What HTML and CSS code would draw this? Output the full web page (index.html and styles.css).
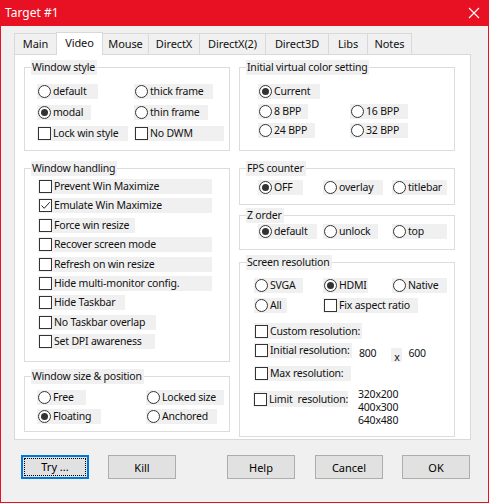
FILE: index.html
```html
<!DOCTYPE html>
<html>
<head>
<meta charset="utf-8">
<link rel="stylesheet" href="styles.css">
</head>
<body>
<div class="window">
  <div class="titlebar">
    <span class="title">Target #1</span>
    <svg class="close" width="12" height="12" viewBox="0 0 12 12"><path d="M1 1 L11 11 M11 1 L1 11" stroke="#fff" stroke-width="1.1" fill="none"/></svg>
  </div>
  <div class="body">
    <div class="tabs">
      <div class="tab t-main">Main</div>
      <div class="tab t-video sel">Video</div>
      <div class="tab t-mouse">Mouse</div>
      <div class="tab t-dx">DirectX</div>
      <div class="tab t-dx2">DirectX(2)</div>
      <div class="tab t-d3d">Direct3D</div>
      <div class="tab t-libs">Libs</div>
      <div class="tab t-notes">Notes</div>
    </div>
    <div class="panel">
      <div class="col">
        <fieldset class="gb gb-ws">
          <legend>Window style</legend>
          <div class="grid2 ws-grid">
            <label class="ctl w-default"><span class="radio"></span>default</label>
            <label class="ctl w-thick"><span class="radio"></span>thick frame</label>
            <label class="ctl w-modal"><span class="radio on"></span>modal</label>
            <label class="ctl w-thin"><span class="radio"></span>thin frame</label>
            <label class="ctl w-lock"><span class="check"></span>Lock win style</label>
            <label class="ctl w-nodwm"><span class="check"></span>No DWM</label>
          </div>
        </fieldset>
        <fieldset class="gb gb-wh">
          <legend>Window handling</legend>
          <div class="stack wh-stack">
            <label class="ctl w-long"><span class="check"></span>Prevent Win Maximize</label>
            <label class="ctl w-long"><span class="check on"><svg width="11" height="11" viewBox="0 0 11 11"><path d="M1.5 5.5 L4.2 8.3 L9.8 2.2" stroke="#222" stroke-width="1" fill="none"/></svg></span>Emulate Win Maximize</label>
            <label class="ctl w-force"><span class="check"></span>Force win resize</label>
            <label class="ctl w-long"><span class="check"></span>Recover screen mode</label>
            <label class="ctl w-long"><span class="check"></span>Refresh on win resize</label>
            <label class="ctl w-long"><span class="check"></span>Hide multi-monitor config.</label>
            <label class="ctl w-hidetb"><span class="check"></span>Hide Taskbar</label>
            <label class="ctl w-notb"><span class="check"></span>No Taskbar overlap</label>
            <label class="ctl w-dpi"><span class="check"></span>Set DPI awareness</label>
          </div>
        </fieldset>
        <fieldset class="gb gb-wsp">
          <legend>Window size &amp; position</legend>
          <div class="grid2 wsp-grid">
            <label class="ctl w-free"><span class="radio"></span>Free</label>
            <label class="ctl w-locked"><span class="radio"></span>Locked size</label>
            <label class="ctl w-floating"><span class="radio on"></span>Floating</label>
            <label class="ctl w-anch"><span class="radio"></span>Anchored</label>
          </div>
        </fieldset>
      </div>
      <div class="col">
        <fieldset class="gb gb-color">
          <legend>Initial virtual color setting</legend>
          <div class="grid2 color-grid">
            <label class="ctl w-current"><span class="radio on"></span>Current</label>
            <span></span>
            <label class="ctl w-8bpp"><span class="radio"></span>8 BPP</label>
            <label class="ctl w-16bpp"><span class="radio"></span>16 BPP</label>
            <label class="ctl w-24bpp"><span class="radio"></span>24 BPP</label>
            <label class="ctl w-16bpp"><span class="radio"></span>32 BPP</label>
          </div>
        </fieldset>
        <fieldset class="gb gb-fps">
          <legend>FPS counter</legend>
          <div class="grid3 fps-grid">
            <label class="ctl w-off"><span class="radio on"></span>OFF</label>
            <label class="ctl w-overlay"><span class="radio"></span>overlay</label>
            <label class="ctl w-titlebar"><span class="radio"></span>titlebar</label>
          </div>
        </fieldset>
        <fieldset class="gb gb-z">
          <legend>Z order</legend>
          <div class="grid3 z-grid">
            <label class="ctl w-zdef"><span class="radio on"></span>default</label>
            <label class="ctl w-unlock"><span class="radio"></span>unlock</label>
            <label class="ctl w-titlebar"><span class="radio"></span>top</label>
          </div>
        </fieldset>
        <fieldset class="gb gb-sr">
          <legend>Screen resolution</legend>
          <div class="grid3 sr-grid">
            <label class="ctl w-svga"><span class="radio"></span>SVGA</label>
            <label class="ctl w-hdmi"><span class="radio on"></span>HDMI</label>
            <label class="ctl w-titlebar"><span class="radio"></span>Native</label>
            <label class="ctl w-all"><span class="radio"></span>All</label>
            <label class="ctl w-fix span2"><span class="check"></span>Fix aspect ratio</label>
          </div>
          <div class="sr-stack">
            <label class="ctl tall w-custom"><span class="check"></span>Custom resolution:</label>
            <div class="row-init">
              <label class="ctl w-init"><span class="check"></span>Initial resolution:</label>
              <span class="num n800">800</span>
              <span class="xbox">x</span>
              <span class="num n600">600</span>
            </div>
            <label class="ctl w-max"><span class="check"></span>Max resolution:</label>
            <div class="row-limit">
              <label class="ctl tall w-limit"><span class="check"></span>Limit&nbsp; resolution:</label>
              <div class="reslist">
                <div>320x200</div>
                <div>400x300</div>
                <div>640x480</div>
              </div>
            </div>
          </div>
        </fieldset>
      </div>
    </div>
    <div class="buttons">
      <button class="btn focus"><span class="focusrect">Try ...</span></button>
      <button class="btn b-kill">Kill</button>
      <button class="btn b-help">Help</button>
      <button class="btn b-cancel">Cancel</button>
      <button class="btn b-ok">OK</button>
    </div>
  </div>
</div>
</body>
</html>
```
FILE: styles.css
```css
* { box-sizing: border-box; }
html, body { margin: 0; padding: 0; }
body {
  width: 489px;
  height: 503px;
  overflow: hidden;
  background: #f0f0f0;
  font-family: "Noto Sans", "Open Sans", sans-serif;
  font-size: 10.5px;
  letter-spacing: -0.2px;
  color: #111;
}
.window {
  width: 489px;
  height: 503px;
  border: 1px solid #e81123;
  border-top: none;
  background: #f0f0f0;
  display: flex;
  flex-direction: column;
}
.titlebar {
  height: 26px;
  margin: 0 -1px;
  background: #e81123;
  color: #fff;
  display: flex;
  align-items: center;
  justify-content: space-between;
  padding: 0 9px 0 5px;
}
.title { font-size: 12px; line-height: 1; letter-spacing: 0; }
.close { display: block; }

.body { padding: 6px 0 0 13px; }

.tabs {
  display: flex;
  align-items: flex-end;
  height: 22px;
}
.tab {
  height: 21px;
  border: 1px solid #d9d9d9;
  border-bottom: none;
  background: #f0f0f0;
  margin-left: -1px;
  text-align: center;
  line-height: 19px;
  white-space: nowrap;
  font-size: 11px;
  letter-spacing: -0.1px;
}
.tab:first-child { margin-left: 0; }
.tab.sel {
  height: 23px;
  margin-bottom: -1px;
  background: #fff;
  position: relative;
  z-index: 1;
  line-height: 20px;
}
.t-main { width: 43px; }
.t-video { width: 47px; }
.t-mouse { width: 47px; }
.t-dx { width: 52px; }
.t-dx2 { width: 67px; }
.t-d3d { width: 64px; }
.t-libs { width: 40px; }
.t-notes { width: 45px; }

.panel {
  width: 457px;
  height: 386px;
  border: 1px solid #d9d9d9;
  background: #fff;
  padding: 5px 0 0 9px;
  display: grid;
  grid-template-columns: 206px 216px;
  column-gap: 9px;
  align-items: start;
}
.col { display: flex; flex-direction: column; }

.gb {
  margin: 0;
  padding: 0;
  border: 1px solid #dcdcdc;
  min-width: 0;
}
.gb legend {
  margin-left: 6px;
  padding: 0 2px 0 1px;
  height: 15px;
  line-height: 15px;
  background: #f0f0f0;
}
.gb-wh { margin-top: 10px; }
.gb-wsp { margin-top: 7px; }
.gb-fps { margin-top: 10px; }
.gb-z { margin-top: 3px; }
.gb-sr { margin-top: 5px; }

.ctl {
  display: flex;
  align-items: center;
  gap: 2px;
  height: 15px;
  padding-left: 1px;
  background: #f0f0f0;
  white-space: nowrap;
  line-height: 15px;
}
.ctl.tall { height: 16px; }
.radio, .check {
  flex: none;
  width: 13px;
  height: 13px;
  border: 1px solid #333;
  background: #fff;
  display: flex;
  align-items: center;
  justify-content: center;
}
.radio { border-radius: 50%; }
.radio.on::after {
  content: "";
  width: 7px;
  height: 7px;
  border-radius: 50%;
  background: #333;
}
.check svg { display: block; }

.grid2 { display: grid; }
.grid3 { display: grid; }
.stack { display: flex; flex-direction: column; }

.ws-grid {
  grid-template-columns: 97px auto;
  row-gap: 6px;
  padding: 9px 0 9px 12px;
}
.wh-stack {
  gap: 4.4px;
  padding: 3px 0 12px 13px;
  align-items: flex-start;
}
.wsp-grid {
  grid-template-columns: 109px auto;
  row-gap: 4px;
  padding: 6px 0 7px 12px;
}
.color-grid {
  grid-template-columns: 92px auto;
  row-gap: 4.5px;
  padding: 9px 0 12px 18px;
}
.fps-grid, .z-grid, .sr-grid {
  grid-template-columns: 65px 69px auto;
  padding-left: 18px;
}
.fps-grid { padding-top: 4px; padding-bottom: 9px; }
.z-grid { padding-top: 1px; padding-bottom: 10px; }
.sr-grid {
  grid-template-columns: 69px 69px auto;
  padding-left: 14px;
  padding-top: 8px;
  row-gap: 5px;
}
.span2 { grid-column: span 2; }

.grid2 > *, .grid3 > *, .stack > * { justify-self: start; }

.sr-stack {
  display: flex;
  flex-direction: column;
  align-items: flex-start;
  padding: 10px 0 9px 14px;
  gap: 4px;
}
.row-init { display: flex; align-items: flex-start; }
.num { line-height: 15px; margin-top: 3px; }
.n800 { margin-left: 7px; }
.xbox {
  margin-left: 15px;
  width: 11px;
  height: 14px;
  margin-top: 5px;
  background: #f0f0f0;
  text-align: center;
  line-height: 18px;
}
.n600 { margin-left: 6px; }
.row-limit { display: flex; align-items: flex-start; margin-top: 6px; margin-left: -1px; }
.reslist { margin-left: 10px; margin-top: -3px; line-height: 13px; }

/* control widths */
.w-default { width: 61px; }
.w-thick { width: 79px; }
.w-modal { width: 54px; }
.w-thin { width: 74px; }
.w-lock { width: 91px; }
.w-nodwm { width: 90px; }
.w-long { width: 174px; }
.w-force { width: 97px; }
.w-hidetb { width: 87px; }
.w-notb { width: 118px; }
.w-dpi { width: 117px; }
.w-free { width: 49px; }
.w-locked { width: 78px; }
.w-floating { width: 64px; }
.w-anch { width: 71px; }
.w-current { width: 62px; }
.w-8bpp { width: 50px; }
.w-16bpp { width: 58px; }
.w-24bpp { width: 57px; }
.w-off { width: 45px; }
.w-overlay { width: 60px; }
.w-titlebar { width: 55px; }
.w-zdef { width: 59px; }
.w-unlock { width: 55px; }
.w-svga { width: 49px; }
.w-hdmi { width: 45px; }
.w-all { width: 33px; }
.w-fix { width: 95px; }
.w-custom { width: 108px; }
.w-init { width: 98px; }
.w-max { width: 97px; }
.w-limit { width: 95px; }

.buttons {
  display: flex;
  margin-top: 15px;
  padding-left: 7px;
}
.btn {
  width: 68px;
  height: 24px;
  border: 1px solid #adadad;
  background: #e1e1e1;
  font-family: inherit;
  font-size: 11px;
  color: #000;
  padding: 0;
  margin: 0;
}
.btn.focus {
  border: 2px solid #0078d7;
  padding: 1px;
}
.focusrect {
  display: block;
  height: 100%;
  border: 1px dotted #000;
  line-height: 16px;
}
.b-kill { margin-left: 19px; }
.b-help { margin-left: 51px; }
.b-cancel { margin-left: 20px; }
.b-ok { margin-left: 19px; }
```
